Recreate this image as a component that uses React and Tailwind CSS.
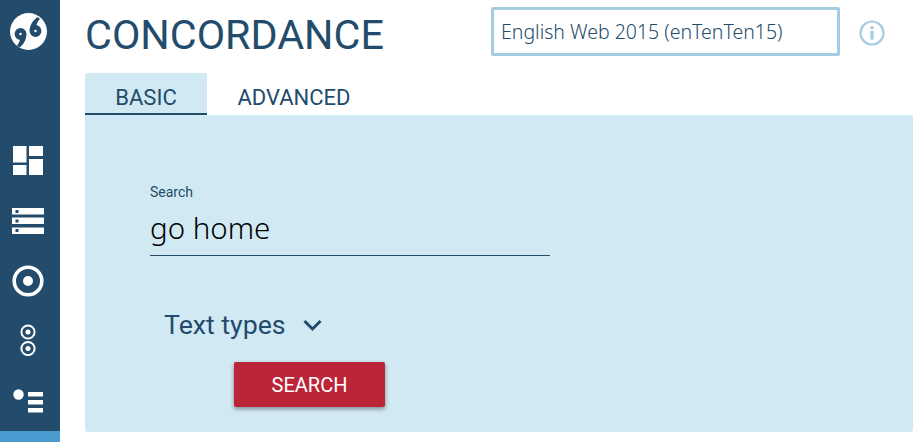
import React from 'react';

const roboto = "font-['Roboto',sans-serif]";

const LogoIcon = () => (
  <svg width="37" height="37" viewBox="0 0 37 37">
    <circle cx="18.500" cy="18.500" r="18.500" fill="#fff" />
    <g fill="none" stroke="#234b6b" strokeWidth="4.600">
      <circle cx="10.500" cy="21" r="3.600" />
      <circle cx="25.500" cy="18" r="3.600" />
    </g>
    <g fill="#234b6b">
      <path d="M16.400 21c0 5.500-2.500 10-6.900 13.500l-2.500-2c2-2.500 3-4.500 3-7z" />
      <path d="M19.600 18c0-5.500 3-10.500 7.900-14l2.500 2c-2.500 2.500-3.500 4.500-3.500 8z" />
    </g>
  </svg>
);

const DashboardIcon = () => (
  <svg width="30" height="30" viewBox="0 0 30 30" fill="#fff">
    <rect x="0" y="0" width="13.500" height="16.500" />
    <rect x="16" y="0" width="14" height="10" />
    <rect x="16" y="13" width="14" height="16" />
    <rect x="0" y="19" width="13.500" height="10" />
  </svg>
);

const ListIcon = () => (
  <svg width="32" height="26" viewBox="0 0 32 26">
    <rect x="0" y="0" width="32" height="6.500" fill="#fff" />
    <rect x="0" y="9.500" width="32" height="6.500" fill="#fff" />
    <rect x="0" y="19.500" width="32" height="6.500" fill="#fff" />
    <rect x="3.500" y="2" width="3" height="3" fill="#234b6b" />
    <rect x="3.500" y="11.500" width="3" height="3" fill="#234b6b" />
    <rect x="3.500" y="21" width="3" height="3" fill="#234b6b" />
  </svg>
);

const TargetIcon = () => (
  <svg width="32" height="32" viewBox="0 0 32 32">
    <circle cx="16" cy="16" r="13.800" fill="none" stroke="#fff" strokeWidth="3.600" />
    <circle cx="16" cy="16" r="5" fill="#fff" />
  </svg>
);

const DoubleTargetIcon = () => (
  <svg width="16" height="32" viewBox="0 0 16 32">
    <circle cx="8" cy="8" r="6.600" fill="none" stroke="#fff" strokeWidth="2" />
    <circle cx="8" cy="8" r="2.500" fill="#fff" />
    <circle cx="8" cy="24.500" r="6.600" fill="none" stroke="#fff" strokeWidth="2" />
    <circle cx="8" cy="24.500" r="2.500" fill="#fff" />
  </svg>
);

const KeywordIcon = () => (
  <svg width="31" height="24" viewBox="0 0 31 24" fill="#fff">
    <circle cx="5.500" cy="5.500" r="5.200" />
    <rect x="15" y="3" width="15" height="4.500" />
    <rect x="15" y="11" width="15" height="4.500" />
    <rect x="15" y="19" width="15" height="4.500" />
  </svg>
);

const InfoIcon = () => (
  <svg width="26" height="26" viewBox="0 0 26 26">
    <circle cx="13" cy="13" r="11.500" fill="none" stroke="#a5cce2" strokeWidth="2.200" />
    <circle cx="13" cy="7.800" r="1.800" fill="#a5cce2" />
    <rect x="11.400" y="11" width="3.200" height="8.500" fill="#a5cce2" />
  </svg>
);

const ChevronIcon = () => (
  <svg width="19" height="13" viewBox="0 0 19 13">
    <path d="M1.500 2 9.500 10l8-8" fill="none" stroke="#234b6b" strokeWidth="3" />
  </svg>
);

const Sidebar = () => (
  <div className="flex h-full w-[60px] shrink-0 flex-col bg-[#234b6b]">
    <div className="flex h-[431px] flex-col items-center pr-[4px] pt-[13px]">
      <LogoIcon />
      <div className="mt-[96px]"><DashboardIcon /></div>
      <div className="mt-[32px]"><ListIcon /></div>
      <div className="mt-[31px]"><TargetIcon /></div>
      <div className="mt-[27px]"><DoubleTargetIcon /></div>
      <div className="mt-[33px]"><KeywordIcon /></div>
    </div>
    <div className="h-[11px] bg-[#4b9bd0]" />
  </div>
);

const App = () => {
  return (
    <div className={`flex h-[442px] w-[913px] overflow-hidden bg-white text-[#234b6b] ${roboto}`}>
      <Sidebar />
      <div className="flex min-w-0 flex-1 flex-col pl-[25px]">
        <div className="flex h-[73px] items-start">
          <h1 className="mt-[11px] w-[406px] text-[41.300px] leading-[48px] font-normal">CONCORDANCE</h1>
          <div className="mt-[7px] flex h-[49px] w-[349px] items-center rounded-[2px] border-[3px] border-[#a5cce2] pl-[7px] font-['Noto_Sans',sans-serif] text-[19.500px] font-light">
            English Web 2015 (enTenTen15)
          </div>
          <div className="ml-[19px] mt-[20px]"><InfoIcon /></div>
        </div>

        <div className="flex h-[42px] text-[22px]">
          <div className="flex w-[122px] items-center justify-center rounded-t-[2px] border-b-2 border-[#234b6b] bg-[#d0e9f3] pt-[8px]">BASIC</div>
          <div className="flex w-[174px] items-center justify-center pt-[8px] pb-[2px]">ADVANCED</div>
        </div>

        <div className="h-[317px] rounded-b-[3px] bg-[#d0e9f3] pl-[65px] pt-[69px]">
          <label className="block text-[14px] leading-[16px]">Search</label>
          <div className="mt-[6px] flex h-[50px] w-[400px] items-center border-b border-[#234b6b] pb-[4px] font-['Noto_Sans',sans-serif] text-[29.500px] font-light text-black">
            go home
          </div>
          <div className="ml-[14px] mt-[52px] flex h-[34px] items-center gap-[17px] text-[26.700px]">
            <span>Text types</span>
            <ChevronIcon />
          </div>
          <button className="ml-[84px] mt-[20px] block h-[45px] w-[151px] rounded-[2px] bg-[#bc2438] text-[20px] text-white shadow-[0_2px_4px_rgba(0,0,0,0.4)]">
            SEARCH
          </button>
        </div>
      </div>
    </div>
  );
};

export default App;
